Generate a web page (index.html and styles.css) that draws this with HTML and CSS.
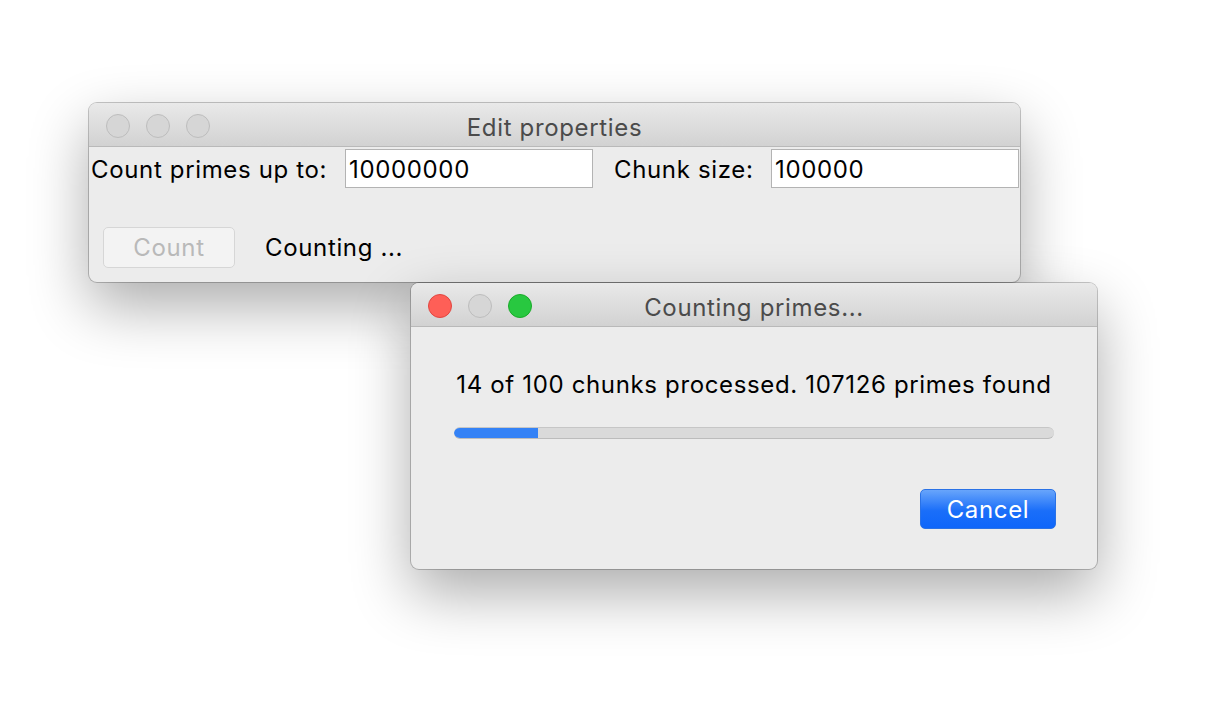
FILE: index.html
```html
<!DOCTYPE html>
<html>
<head>
<meta charset="utf-8">
<link rel="stylesheet" href="styles.css">
</head>
<body>
<div class="desktop">
  <div class="window win-edit">
    <div class="titlebar">
      <div class="lights">
        <span class="light off"></span>
        <span class="light off"></span>
        <span class="light off"></span>
      </div>
      <div class="title">Edit properties</div>
    </div>
    <div class="edit-body">
      <div class="form-row">
        <label class="label primes-label">Count primes up to:</label>
        <div class="field">10000000</div>
        <label class="label chunk-label">Chunk size:</label>
        <div class="field">100000</div>
      </div>
      <div class="action-row">
        <div class="btn disabled">Count</div>
        <span class="status">Counting ...</span>
      </div>
    </div>
  </div>

  <div class="window win-progress">
    <div class="titlebar">
      <div class="lights">
        <span class="light red"></span>
        <span class="light off"></span>
        <span class="light green"></span>
      </div>
      <div class="title">Counting primes...</div>
    </div>
    <div class="progress-body">
      <div class="message">14 of 100 chunks processed. 107126 primes found</div>
      <div class="progress"><div class="progress-fill" style="width:14%"></div></div>
      <div class="buttons">
        <div class="btn primary">Cancel</div>
      </div>
    </div>
  </div>
</div>
</body>
</html>
```

FILE: styles.css
```css
html, body {
  margin: 0;
  padding: 0;
  background: #ffffff;
}
body {
  font-family: "Inter", "Liberation Sans", sans-serif;
  color: #000;
  font-size: 24px;
  letter-spacing: 0.65px;
}
.desktop {
  position: relative;
  width: 1224px;
  height: 702px;
  overflow: hidden;
}
.window {
  position: absolute;
  background: #ececec;
  border-radius: 8px;
  box-shadow: 0 0 0 1px rgba(0,0,0,0.22), 0 24px 60px rgba(0,0,0,0.33);
  overflow: hidden;
  display: flex;
  flex-direction: column;
}
.win-edit {
  left: 89px;
  top: 103px;
  width: 931px;
  height: 179px;
}
.win-progress {
  left: 411px;
  top: 283px;
  width: 686px;
  height: 286px;
}
.titlebar {
  position: relative;
  height: 43px;
  flex: 0 0 43px;
  background: linear-gradient(#e9e9e9, #d2d2d2);
  border-bottom: 1px solid #b9b9b9;
  display: flex;
  align-items: center;
  justify-content: center;
}
.lights {
  position: absolute;
  left: 17px;
  top: 11px;
  display: flex;
  gap: 16px;
}
.light {
  width: 24px;
  height: 24px;
  border-radius: 50%;
  box-sizing: border-box;
}
.light.off {
  background: #d6d6d6;
  border: 1px solid #bdbdbd;
}
.light.red {
  background: #fe5f57;
  border: 1px solid #e14640;
}
.light.green {
  background: #28c840;
  border: 1px solid #1aab29;
}
.title {
  color: #4b4b4b;
  line-height: 30px;
  padding-top: 6px;
}
.edit-body {
  padding: 2px 1px 0 2px;
}
.form-row {
  display: flex;
  align-items: stretch;
  height: 39px;
}
.label {
  padding-top: 2px;
  line-height: 37px;
  white-space: nowrap;
  flex: 0 0 auto;
}
.primes-label {
  width: 254px;
}
.chunk-label {
  width: 157px;
  margin-left: 21px;
}
.field {
  box-sizing: border-box;
  flex: 0 0 248px;
  height: 39px;
  background: #fff;
  border: 1px solid #b3b3b3;
  padding-top: 2px;
  line-height: 35px;
  padding-left: 3px;
}
.action-row {
  display: flex;
  align-items: center;
  margin-top: 39px;
  padding-left: 12px;
}
.btn {
  box-sizing: border-box;
  height: 41px;
  border-radius: 5px;
  display: flex;
  align-items: center;
  justify-content: center;
}
.btn.disabled {
  width: 132px;
  background: #f3f3f3;
  border: 1px solid #d6d6d6;
  color: #b9b9b9;
}
.status {
  margin-left: 30px;
}
.progress-body {
  display: flex;
  flex-direction: column;
  padding: 42px 42px 0 42px;
}
.message {
  text-align: center;
  line-height: 30px;
  height: 30px;
  padding-top: 1px;
}
.progress {
  margin-top: 27px;
  margin-left: 1px;
  height: 12px;
  width: 600px;
  box-sizing: border-box;
  background: #dadada;
  border-top: 1px solid #c6c6c6;
  border-bottom: 1px solid #bcbcbc;
  border-radius: 6px;
  overflow: hidden;
}
.progress-fill {
  height: 12px;
  margin-top: -1px;
  background: #3482f6;
  border-radius: 6px 0 0 6px;
}
.buttons {
  display: flex;
  justify-content: flex-end;
  margin-top: 50px;
}
.btn.primary {
  width: 136px;
  height: 40px;
  margin-right: -1px;
  color: #fff;
  background: linear-gradient(#68a5fb, #1a6ef9 55%, #0e66fa);
  border: 1px solid #2a72e6;
}
```
